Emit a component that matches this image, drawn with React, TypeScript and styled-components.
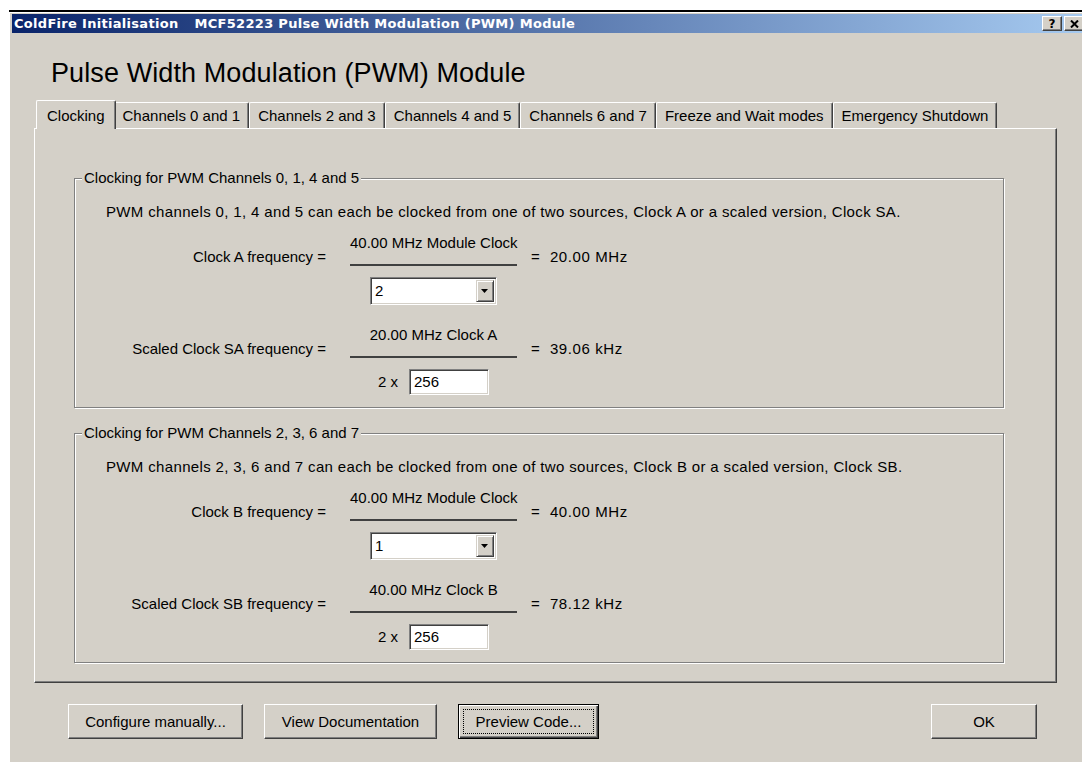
import React from 'react';
import styled, { createGlobalStyle } from 'styled-components';

const GlobalStyle = createGlobalStyle`
  html, body { margin: 0; padding: 0; background: #ffffff; }
  body {
    font-family: "Liberation Sans", Arial, sans-serif;
    font-size: 15px;
    color: #000000;
  }
`;

const Screen = styled.div`
  height: 762px;
  box-sizing: border-box;
  padding: 10px 0 0 9px;
  overflow: hidden;
`;

const Window = styled.div`
  width: calc(100% + 4px);
  height: 100%;
  box-sizing: border-box;
  background: #d4d0c8;
  border-top: 2px solid #000000;
  padding: 2px 0 0 3px;
  box-shadow: inset 1px 1px #ffffff;
`;

const TitleBar = styled.div`
  height: 19px;
  display: flex;
  align-items: center;
  padding-left: 2px;
  background: linear-gradient(to right, #0a246a, #a6caf0);
  color: #ffffff;
  font: bold 13px "DejaVu Sans", Verdana, sans-serif;
  letter-spacing: 0.3px;
  white-space: nowrap;
  > span + span { margin-left: 16px; }
`;

const CaptionButtons = styled.div`
  margin-left: auto;
  display: flex;
  gap: 2px;
  padding-right: 2px;
`;

const CaptionButton = styled.div`
  width: 20px;
  height: 15px;
  box-sizing: border-box;
  display: flex;
  align-items: center;
  justify-content: center;
  background: #d4d0c8;
  border: 1px solid;
  border-color: #ffffff #404040 #404040 #ffffff;
  box-shadow: inset -1px -1px #808080;
  color: #000000;
  font: bold 12px "DejaVu Sans", Verdana, sans-serif;
  letter-spacing: 0;
`;

const Body = styled.div`
  padding-left: 22px;
`;

const Heading = styled.h1`
  margin: 25px 0 0 17px;
  font: normal 27px/31px "Liberation Sans", Arial, sans-serif;
  letter-spacing: 0.1px;
`;

const TabStrip = styled.div`
  margin-top: 11px;
  height: 29px;
  margin-bottom: -1px;
  display: flex;
  align-items: flex-end;
  padding-left: 4px;
`;

const Tab = styled.div<{ $active?: boolean }>`
  position: relative;
  z-index: ${p => (p.$active ? 2 : 1)};
  box-sizing: border-box;
  height: ${p => (p.$active ? '29px' : '26px')};
  margin: 0 ${p => (p.$active ? '-2px' : '0')} ${p => (p.$active ? '0' : '1px')};
  padding: 0 ${p => (p.$active ? '10px' : '8px')};
  display: flex;
  align-items: center;
  white-space: nowrap;
  background: #d4d0c8;
  border: 1px solid;
  border-color: #ffffff #404040 transparent #ffffff;
  border-bottom: none;
  border-radius: 2px 2px 0 0;
  box-shadow: inset -1px 0 #808080;
`;

const Panel = styled.div`
  width: 1023px;
  height: 555px;
  box-sizing: border-box;
  border: 1px solid;
  border-color: #ffffff #404040 #404040 #ffffff;
  box-shadow: inset -1px -1px #808080;
  padding-top: 40px;
`;

const Group = styled.fieldset`
  width: 930px;
  box-sizing: border-box;
  margin: 0 0 16px 39px;
  padding: 16px 7px 12px 7px;
  border: 1px solid #808080;
  box-shadow: inset 1px 1px #ffffff, 1px 1px #ffffff;
  min-inline-size: 0;
`;

const Legend = styled.legend`
  padding: 0 2px;
  line-height: 18px;
  background: #d4d0c8;
`;

const Description = styled.p`
  margin: 0 0 0 24px;
  line-height: 18px;
  letter-spacing: 0.35px;
  white-space: nowrap;
`;

const Formula = styled.div<{ $gap: number }>`
  display: grid;
  grid-template-columns: 268px 167px auto;
  margin-top: ${p => p.$gap}px;
  line-height: 18px;
`;

const FormulaLabel = styled.div`
  align-self: end;
  text-align: right;
  padding-right: 24px;
  white-space: nowrap;
`;

const Numerator = styled.div`
  text-align: center;
  white-space: nowrap;
  padding-bottom: 12px;
  border-bottom: 2px solid #404040;
`;

const Result = styled.div`
  align-self: end;
  padding-left: 14px;
  letter-spacing: 0.6px;
  white-space: pre;
`;

const Denominator = styled.div`
  grid-column: 2;
  margin-top: 11px;
  display: flex;
  align-items: center;
  justify-content: center;
  gap: 11px;
`;

const Sunken = styled.div<{ $w: number; $h: number }>`
  width: ${p => p.$w}px;
  height: ${p => p.$h}px;
  box-sizing: border-box;
  display: flex;
  align-items: center;
  background: #ffffff;
  border: 1px solid;
  border-color: #808080 #ffffff #ffffff #808080;
  box-shadow: inset 1px 1px #404040, inset -1px -1px #d4d0c8;
  padding-left: 4px;
`;

const SelectValue = styled.span`
  flex: 1;
`;

const DropButton = styled.div`
  width: 18px;
  height: 22px;
  box-sizing: border-box;
  margin-right: 2px;
  display: flex;
  align-items: center;
  justify-content: center;
  background: #d4d0c8;
  border: 1px solid;
  border-color: #d4d0c8 #404040 #404040 #d4d0c8;
  box-shadow: inset 1px 1px #ffffff, inset -1px -1px #808080;
`;

const Footer = styled.div`
  width: 1023px;
  display: flex;
  align-items: center;
  margin-top: 21px;
  padding: 0 20px 0 34px;
  box-sizing: border-box;
`;

const Button = styled.button<{ $w: number; $default?: boolean; $push?: boolean }>`
  position: relative;
  width: ${p => p.$w}px;
  height: 35px;
  margin-left: ${p => (p.$push ? 'auto' : '0')};
  margin-right: 21px;
  padding: 0;
  font: 15px "Liberation Sans", Arial, sans-serif;
  color: #000000;
  background: #d4d0c8;
  border: 1px solid;
  border-color: ${p => (p.$default ? '#000000' : '#ffffff #404040 #404040 #ffffff')};
  box-shadow: ${p =>
    p.$default
      ? 'inset 1px 1px #ffffff, inset -1px -1px #404040, inset -2px -2px #808080'
      : 'inset -1px -1px #808080'};
  &:last-child { margin-right: 0; }
  ${p =>
    p.$default &&
    `&::after {
      content: '';
      position: absolute;
      inset: 4px;
      border: 1px dotted #000000;
    }`}
`;

const DownArrow = () => (
  <svg width="8" height="5" viewBox="0 0 8 5">
    <path d="M0 0 H7 L3.5 4 Z" fill="#000" />
  </svg>
);

const CloseGlyph = () => (
  <svg width="9" height="8" viewBox="0 0 9 8">
    <path d="M1 0.5 L8 7.5 M8 0.5 L1 7.5" stroke="#000" strokeWidth="2" />
  </svg>
);

type ClockGroupProps = {
  channels: string;
  source: string;
  scaled: string;
  moduleClock: string;
  clockFreq: string;
  divider: string;
  scaledFreq: string;
  prescale: string;
};

const ClockGroup = (p: ClockGroupProps) => (
  <Group>
    <Legend>Clocking for PWM Channels {p.channels}</Legend>
    <Description>
      PWM channels {p.channels} can each be clocked from one of two sources, Clock {p.source} or a
      scaled version, Clock {p.scaled}.
    </Description>
    <Formula $gap={13}>
      <FormulaLabel>Clock {p.source} frequency =</FormulaLabel>
      <Numerator>{p.moduleClock} MHz Module Clock</Numerator>
      <Result>{`=  ${p.clockFreq} MHz`}</Result>
      <Denominator>
        <Sunken $w={127} $h={28}>
          <SelectValue>{p.divider}</SelectValue>
          <DropButton>
            <DownArrow />
          </DropButton>
        </Sunken>
      </Denominator>
    </Formula>
    <Formula $gap={21}>
      <FormulaLabel>Scaled Clock {p.scaled} frequency =</FormulaLabel>
      <Numerator>
        {p.clockFreq} MHz Clock {p.source}
      </Numerator>
      <Result>{`=  ${p.scaledFreq} kHz`}</Result>
      <Denominator>
        <span>2 x</span>
        <Sunken $w={80} $h={26}>
          {p.prescale}
        </Sunken>
      </Denominator>
    </Formula>
  </Group>
);

const tabs = [
  'Clocking',
  'Channels 0 and 1',
  'Channels 2 and 3',
  'Channels 4 and 5',
  'Channels 6 and 7',
  'Freeze and Wait modes',
  'Emergency Shutdown',
];

const App = () => {
  return (
    <Screen>
      <GlobalStyle />
      <Window>
        <TitleBar>
          <span>ColdFire Initialisation</span>
          <span>MCF52223 Pulse Width Modulation (PWM) Module</span>
          <CaptionButtons>
            <CaptionButton>?</CaptionButton>
            <CaptionButton>
              <CloseGlyph />
            </CaptionButton>
          </CaptionButtons>
        </TitleBar>
        <Body>
          <Heading>Pulse Width Modulation (PWM) Module</Heading>
          <TabStrip>
            {tabs.map((t, i) => (
              <Tab key={t} $active={i === 0}>
                {t}
              </Tab>
            ))}
          </TabStrip>
          <Panel>
            <ClockGroup
              channels="0, 1, 4 and 5"
              source="A"
              scaled="SA"
              moduleClock="40.00"
              clockFreq="20.00"
              divider="2"
              scaledFreq="39.06"
              prescale="256"
            />
            <ClockGroup
              channels="2, 3, 6 and 7"
              source="B"
              scaled="SB"
              moduleClock="40.00"
              clockFreq="40.00"
              divider="1"
              scaledFreq="78.12"
              prescale="256"
            />
          </Panel>
          <Footer>
            <Button $w={175}>Configure manually...</Button>
            <Button $w={173}>View Documentation</Button>
            <Button $w={141} $default>
              Preview Code...
            </Button>
            <Button $w={106} $push>
              OK
            </Button>
          </Footer>
        </Body>
      </Window>
    </Screen>
  );
};

export default App;
